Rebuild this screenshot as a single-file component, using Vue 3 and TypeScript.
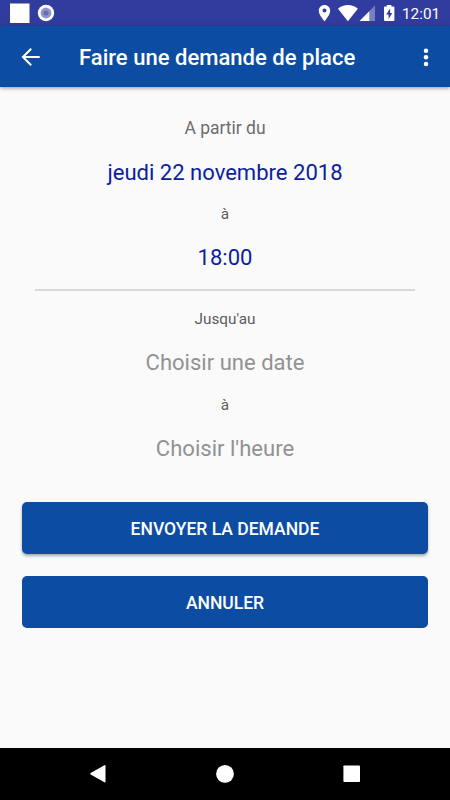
<script setup lang="ts">
import { ref } from 'vue'

const startDate = ref('jeudi 22 novembre 2018')
const startTime = ref('18:00')
const endDate = ref('')
const endTime = ref('')
</script>

<template>
  <div class="screen">
    <div class="status-bar">
      <svg class="status-left" width="60" height="26" viewBox="0 0 60 26">
        <rect x="10" y="3.5" width="19.5" height="19.5" fill="#fff" />
        <circle cx="46" cy="13" r="8.2" fill="#fff" />
        <circle cx="46" cy="13" r="5.4" fill="#8f96cd" />
        <circle cx="46" cy="13" r="2.5" fill="#656cb5" />
      </svg>
      <svg class="status-right" width="82" height="26" viewBox="0 0 82 26">
        <path
          fill="#fff"
          fill-rule="evenodd"
          d="M9.5 5C6.2 5 3.8 7.500 3.800 10.700C3.800 14.800 9.500 21.300 9.500 21.300S15.200 14.800 15.200 10.700C15.200 7.500 12.800 5 9.500 5ZM9.500 8.600A2 2 0 1 1 9.500 12.600A2 2 0 1 1 9.500 8.600Z"
        />
        <path fill="#fff" d="M23 8.700C28.500 3.900 37.300 3.900 42.800 8.700L32.900 21.200Z" />
        <path fill="#fff" fill-opacity=".35" d="M60 5.600V21H44.600Z" />
        <path fill="#fff" d="M54.300 11.300V21H44.600Z" />
        <path
          fill="#fff"
          fill-rule="evenodd"
          d="M71.800 5H76.400V6.500H78.400Q79.400 6.500 79.400 7.500V20Q79.400 21 78.400 21H70Q69 21 69 20V7.500Q69 6.500 70 6.500H71.800ZM75.100 8.500L71.200 14.500H73.600V19L77.300 13H75.100Z"
        />
      </svg>
      <span class="clock">12:01</span>
    </div>

    <header class="app-bar">
      <button class="icon-button back" aria-label="Retour">
        <svg width="20" height="20" viewBox="0 0 20 20" fill="none" stroke="#fff" stroke-width="2">
          <path d="M18.700 10H2.500M10.200 1.700L1.900 10L10.200 18.300" />
        </svg>
      </button>
      <h1 class="title">Faire une demande de place</h1>
      <button class="icon-button more" aria-label="Options">
        <svg width="6" height="20" viewBox="0 0 6 20" fill="#fff">
          <circle cx="3" cy="3.700" r="2.250" />
          <circle cx="3" cy="10.300" r="2.250" />
          <circle cx="3" cy="16.900" r="2.250" />
        </svg>
      </button>
    </header>

    <main class="content">
      <section class="period">
        <p class="label heading">A partir du</p>
        <p class="value">{{ startDate }}</p>
        <p class="label">à</p>
        <p class="value">{{ startTime }}</p>
      </section>
      <hr class="divider" />
      <section class="period">
        <p class="label">Jusqu'au</p>
        <p class="value" :class="{ empty: !endDate }">{{ endDate || 'Choisir une date' }}</p>
        <p class="label">à</p>
        <p class="value" :class="{ empty: !endTime }">{{ endTime || "Choisir l'heure" }}</p>
      </section>
      <div class="actions">
        <button class="action raised">ENVOYER LA DEMANDE</button>
        <button class="action">ANNULER</button>
      </div>
    </main>

    <nav class="nav-bar">
      <svg width="18" height="20" viewBox="0 0 18 20" fill="#fff">
        <path d="M15.400 1.300Q16.500 .700 16.500 1.800V17.700Q16.500 18.800 15.400 18.200L1.700 10.500Q.700 9.800 1.700 9.100Z" />
      </svg>
      <svg width="18" height="20" viewBox="0 0 18 20" fill="#fff">
        <circle cx="9" cy="9.900" r="8.900" />
      </svg>
      <svg width="18" height="20" viewBox="0 0 18 20" fill="#fff">
        <rect x=".400" y="1.500" width="16.600" height="16.600" rx=".8" />
      </svg>
    </nav>
  </div>
</template>

<style>
body {
  margin: 0;
  background: #fafafa;
}
</style>

<style scoped>
.screen {
  display: flex;
  flex-direction: column;
  width: 450px;
  height: 800px;
  overflow: hidden;
  background: #fafafa;
  font-family: Roboto, "Liberation Sans", sans-serif;
}

.status-bar {
  display: flex;
  align-items: center;
  flex: none;
  height: 26px;
  background: #303d9f;
}

.status-right {
  margin-left: auto;
}

.clock {
  width: 38px;
  margin: 2px 10px 0 5px;
  color: #fff;
  font-size: 15.3px;
  line-height: 20px;
  text-align: right;
  white-space: nowrap;
}

.app-bar {
  display: flex;
  align-items: center;
  flex: none;
  height: 61px;
  background: #0d4ca3;
  box-shadow: 0 1px 4px rgba(0, 0, 0, 0.42);
}

button {
  margin: 0;
  padding: 0;
  border: 0;
  font-family: inherit;
}

.icon-button {
  display: flex;
  background: none;
}

.back {
  padding-left: 21px;
}

.title {
  flex: 1;
  margin: 3px 0 0 38px;
  color: #fff;
  font-size: 22.05px;
  font-weight: 500;
  line-height: 26px;
  white-space: nowrap;
}

.more {
  padding-right: 21px;
}

.content {
  display: flex;
  flex: 1;
  flex-direction: column;
  padding: 20px 22px 0;
}

.period {
  text-align: center;
}

.label {
  margin: 0;
  padding-bottom: 2px;
  color: #5c5c5c;
  font-size: 15.3px;
  line-height: 38px;
}

.heading {
  padding-bottom: 1px;
  color: #6c6c6c;
  font-size: 17.5px;
  line-height: 42px;
}

.value {
  margin: 0;
  color: #0a1fa0;
  font-size: 22.05px;
  line-height: 46px;
}

.heading + .value {
  margin-bottom: -1px;
}

.empty {
  color: #929292;
}

.divider {
  width: 380px;
  height: 2px;
  margin: 8px auto 9px;
  border: 0;
  background: #dadada;
}

.actions {
  display: grid;
  gap: 22px;
  margin-top: 30px;
}

.action {
  height: 52px;
  padding-top: 1px;
  border-radius: 5px;
  background: #0d4ca3;
  color: #fff;
  font-size: 17.5px;
  font-weight: 500;
  line-height: 20px;
}

.raised {
  box-shadow: 0 2px 3px rgba(0, 0, 0, 0.32);
}

.nav-bar {
  display: flex;
  align-items: center;
  justify-content: space-between;
  flex: none;
  height: 52px;
  padding: 0 89px;
  background: #000;
}
</style>
